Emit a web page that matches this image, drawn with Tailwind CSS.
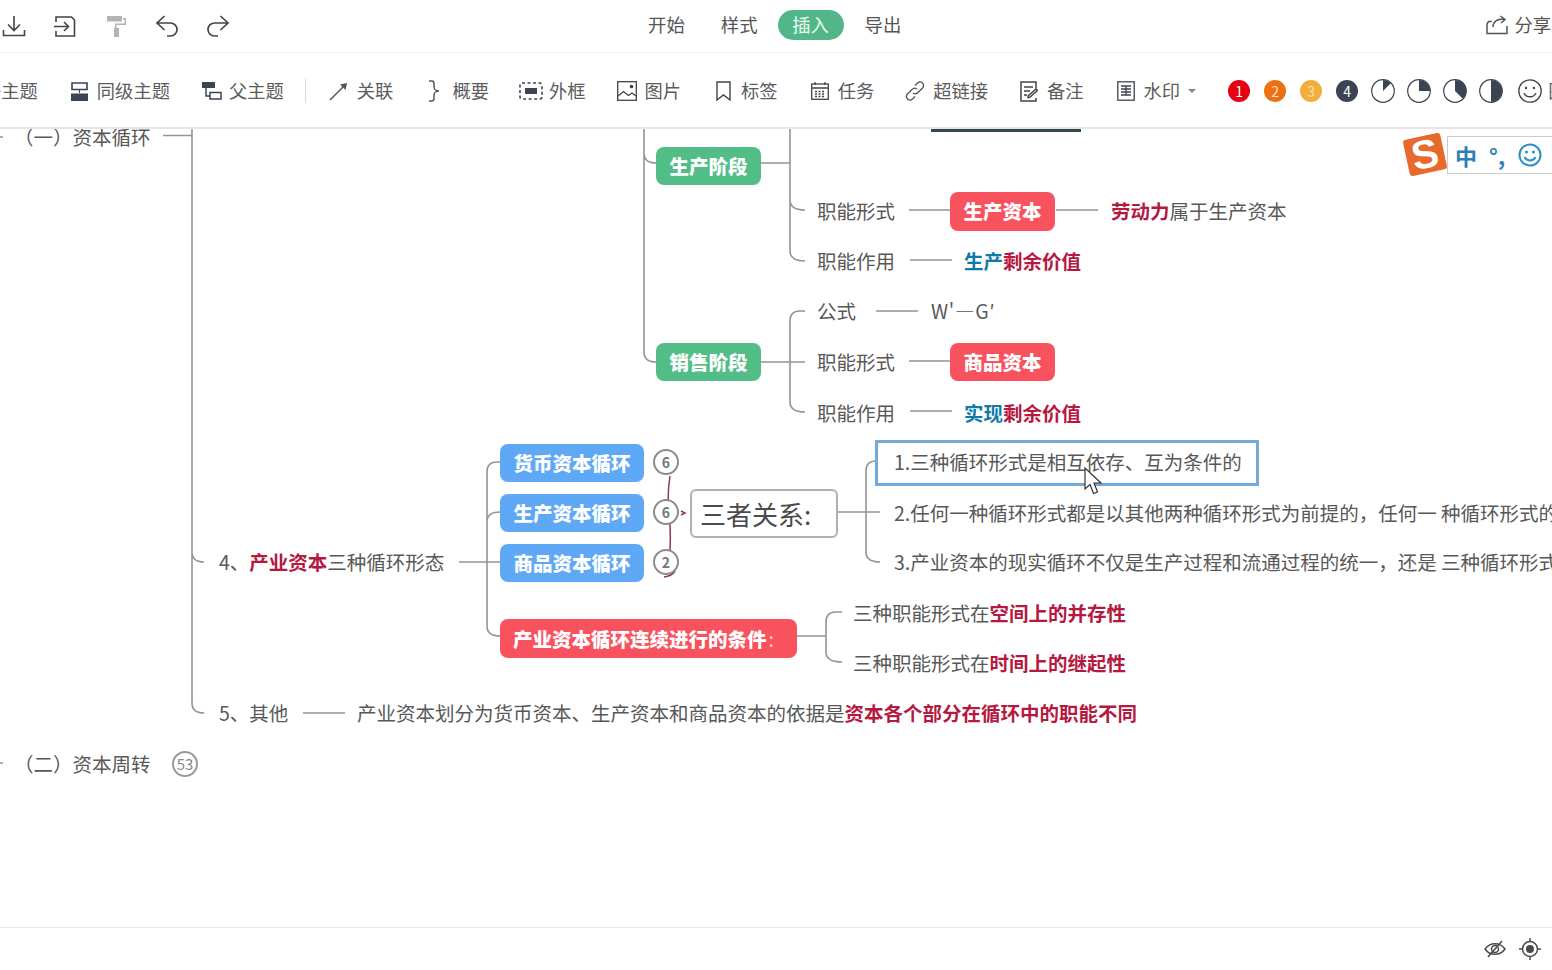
<!DOCTYPE html>
<html lang="zh-CN">
<head>
  <meta charset="UTF-8" />
  <title>思维导图</title>
  <script src="https://cdn.jsdelivr.net/npm/@tailwindcss/browser@4"></script>
</head>
<body class="bg-white overflow-hidden font-['Noto_Sans_CJK_SC','Open_Sans',sans-serif] text-[#555]">
<div class="w-[1552px] h-[970px] flex flex-col overflow-hidden">

  <!-- top bar -->
  <header class="h-[53px] shrink-0 border-b border-[#f2f2f2] flex items-center relative">
    <div class="flex items-center text-[#444] w-[240px]">
      <svg class="ml-[2px] w-[24px] h-[24px]" viewBox="0 0 24 24" fill="none" stroke="currentColor" stroke-width="1.6"><path d="M12 2v14M6 10.500l6 6 6-6M1.500 16v5.500h21V16"/></svg>
      <svg class="ml-[27px] w-[24px] h-[24px]" viewBox="0 0 24 24" fill="none" stroke="currentColor" stroke-width="1.600"><path d="M3 8V3h15.500l3 3v16H3v-5M1 12.500h14M11 8l4.500 4.500L11 17"/></svg>
      <svg class="ml-[27px] w-[24px] h-[24px]" viewBox="0 0 24 24" fill="#b4b4b4"><path d="M3 2h15v5.500H3zM19 4h3v7H12.500v3H15v9h-5V14h1v-4.500h9.500V5.500H19z"/></svg>
      <svg class="ml-[27px] w-[24px] h-[24px]" viewBox="0 0 24 24" fill="none" stroke="currentColor" stroke-width="1.700"><path d="M9.500 2L2 9l7.500 7M2 9h13.500a6 6 0 0 1 0 13H12"/></svg>
      <svg class="ml-[27px] w-[24px] h-[24px]" viewBox="0 0 24 24" fill="none" stroke="currentColor" stroke-width="1.700"><path d="M14.500 2L22 9l-7.500 7M22 9H8.500a6 6 0 0 0 0 13H12"/></svg>
    </div>
    <nav class="ml-[408px] mb-[2px] flex items-center text-[18.400px] text-[#555]">
      <span>开始</span>
      <span class="ml-[36px]">样式</span>
      <span class="ml-[20px] w-[66px] h-[30px] rounded-full bg-[#52b788] text-white/90 flex items-center justify-center">插入</span>
      <span class="ml-[21px]">导出</span>
    </nav>
    <div class="ml-[585px] mb-[2px] flex items-center text-[18.400px] whitespace-nowrap">
      <svg class="w-[22px] h-[20px]" viewBox="0 0 22 20" fill="none" stroke="#555" stroke-width="1.500"><path d="M6 6.500H2.500L1 9v9.500h20V11M7 12c0-5 4-8 11-8M14.500 1L19 4.500 15 8"/></svg>
      <span class="ml-[6px]">分享</span>
    </div>
  </header>

  <!-- insert toolbar -->
  <div class="h-[76px] pt-[2px] shrink-0 border-b-2 border-[#e6e6e6] text-[18.300px] text-[#5c5c5c] whitespace-nowrap relative z-10 bg-white flex items-center">
   <div class="flex items-center w-max shrink-0">
    <span class="ml-[-17px]">子主题</span>

    <svg class="ml-[33px] w-[17px] h-[19px]" viewBox="0 0 17 19"><path d="M1 1h15v6.500H1z" fill="none" stroke="#3b4453" stroke-width="1.600"/><path d="M8.500 8v3" stroke="#3b4453"/><path d="M0 11.500h17V19H0z" fill="#3b4453"/></svg>
    <span class="ml-[9px]">同级主题</span>

    <svg class="ml-[32px] w-[20px] h-[18px]" viewBox="0 0 20 18"><path d="M0 0h13v6H0z" fill="#3b4453"/><path d="M4 6v8h4M8 10.500h11V17H8z" fill="none" stroke="#3b4453" stroke-width="1.500"/></svg>
    <span class="ml-[7px]">父主题</span>

    <span class="ml-[21px] w-px h-[24px] bg-[#d9d9d9]"></span>

    <svg class="ml-[23px] w-[19px] h-[19px]" viewBox="0 0 19 19" fill="none" stroke="#555" stroke-width="1.500"><path d="M1 18L17 2"/><path d="M18 1l-7 1.500 5.500 5.500z" fill="#555" stroke="none"/></svg>
    <span class="ml-[9px]">关联</span>

    <svg class="ml-[34px] w-[15px] h-[22px]" viewBox="0 0 15 22" fill="none" stroke="#555" stroke-width="1.500"><path d="M2 1h3c2 0 2 1.500 2 3v3c0 2 2 4 5 4-3 0-5 2-5 4v3c0 1.500 0 3-2 3H2"/></svg>
    <span class="ml-[10px]">概要</span>

    <svg class="ml-[30px] w-[24px] h-[18px]" viewBox="0 0 24 18"><rect x="1" y="1" width="22" height="16" rx="2" fill="none" stroke="#3b4453" stroke-width="1.600" stroke-dasharray="3 2.500"/><rect x="6" y="6" width="12" height="6" fill="#3b4453"/></svg>
    <span class="ml-[6px]">外框</span>

    <svg class="ml-[31px] w-[20px] h-[20px]" viewBox="0 0 20 20" fill="none" stroke="#444" stroke-width="1.300"><rect x="0.700" y="0.700" width="18.600" height="18.600"/><path d="M1 15l5.500-4.500 5 4 3.500-2.500 4 3"/><circle cx="14.500" cy="5.500" r="1.200" fill="#444"/></svg>
    <span class="ml-[8px]">图片</span>

    <svg class="ml-[35px] w-[15px] h-[20px]" viewBox="0 0 15 20" fill="none" stroke="#444" stroke-width="1.400"><path d="M1 1h13v18l-6.500-5L1 19z"/></svg>
    <span class="ml-[10px]">标签</span>

    <svg class="ml-[33px] w-[18px] h-[18px]" viewBox="0 0 18 18" fill="none" stroke="#444" stroke-width="1.300"><rect x="0.700" y="2" width="16.600" height="15.300"/><path d="M4 0v3M14 0v3M1 6h16" /><path d="M4 9.500h10M4 12h10M4 14.500h10" stroke-dasharray="2 1.500"/></svg>
    <span class="ml-[9px]">任务</span>

    <svg class="ml-[31px] w-[20px] h-[20px]" viewBox="0 0 20 20" fill="none" stroke="#555" stroke-width="1.300"><path d="M8 12c2 1.500 3.500 1 5-.5l4.500-4.500c3-3.500-1.500-8-5-5L10 4.500M12 8c-2-1.500-3.500-1-5 .5L2.500 13c-3 3.500 1.500 8 5 5L10 15.500"/></svg>
    <span class="ml-[8px]">超链接</span>

    <svg class="ml-[32px] w-[18px] h-[21px]" viewBox="0 0 18 21" fill="none" stroke="#444" stroke-width="1.500"><path d="M16 8V1H1v19h15v-3M4 6h9M4 10h6M4 14h3M8 15l8-7 1.500 1.500-8 7H8z"/></svg>
    <span class="ml-[9px]">备注</span>

    <svg class="ml-[33px] w-[18px] h-[20px]" viewBox="0 0 18 20" fill="none" stroke="#3b4453"><rect x="0.800" y="0.800" width="16.400" height="18.400" stroke-width="1.300"/><path d="M4 5h10M4 8h10M4 11h10M4 14h10M9 5v9" stroke-width="1.300"/></svg>
    <span class="ml-[9px]">水印</span>
    <span class="ml-[8px] w-0 h-0 border-x-4 border-x-transparent border-t-4 border-t-[#888]"></span>

    <span class="ml-[32px] w-[22px] h-[22px] rounded-full bg-[#e60012] text-white text-[14px] flex items-center justify-center">1</span>
    <span class="ml-[14px] w-[22px] h-[22px] rounded-full bg-[#ef7011] text-white/80 text-[14px] flex items-center justify-center">2</span>
    <span class="ml-[14px] w-[22px] h-[22px] rounded-full bg-[#f2ae3d] text-white/60 text-[14px] flex items-center justify-center">3</span>
    <span class="ml-[14px] w-[22px] h-[22px] rounded-full bg-[#3a4452] text-white text-[14px] flex items-center justify-center">4</span>

    <svg class="ml-[13px] w-[24px] h-[24px]" viewBox="0 0 24 24"><circle cx="12" cy="12" r="11.300" fill="none" stroke="#3b4453" stroke-width="1.200"/><path d="M12 12V1a11 11 0 0 1 7.800 3.200z" fill="#3b4453"/></svg>
    <svg class="ml-[12px] w-[24px] h-[24px]" viewBox="0 0 24 24"><circle cx="12" cy="12" r="11.300" fill="none" stroke="#3b4453" stroke-width="1.200"/><path d="M12 12V1a11 11 0 0 1 11 11z" fill="#3b4453"/></svg>
    <svg class="ml-[12px] w-[24px] h-[24px]" viewBox="0 0 24 24"><circle cx="12" cy="12" r="11.300" fill="none" stroke="#3b4453" stroke-width="1.200"/><path d="M12 12V1a11 11 0 0 1 7.800 18.800z" fill="#3b4453"/></svg>
    <svg class="ml-[12px] w-[24px] h-[24px]" viewBox="0 0 24 24"><circle cx="12" cy="12" r="11.300" fill="none" stroke="#3b4453" stroke-width="1.200"/><path d="M12 1a11 11 0 0 1 0 22z" fill="#3b4453"/></svg>

    <svg class="ml-[15px] w-[24px] h-[24px]" viewBox="0 0 24 24" fill="none" stroke="#444" stroke-width="1.300"><circle cx="12" cy="12" r="11.200"/><path d="M6 14c2 5 10 5 12 0"/><circle cx="8" cy="9" r="1.200" fill="#444" stroke="none"/><circle cx="16" cy="9" r="1.200" fill="#444" stroke="none"/></svg>
    <span class="ml-[6px]">图标</span>
   </div>
  </div>

  <!-- canvas -->
  <main class="relative h-[798px] shrink-0 overflow-hidden text-[19.500px] leading-[28px] text-[#585858] whitespace-nowrap">
    <svg class="absolute left-0 top-0 w-[1552px] h-[798px]" viewBox="0 129 1552 798" fill="none" stroke="#949494" stroke-width="1.600">
      <path d="M0 137h3M0 763h3"/>
      <path d="M163 135.500h29M192 129v574q0 10 12 10M192 552q0 10 12 10"/>
      <path d="M644 129v223q0 10 12 10M644 153q0 10 12 10"/>
      <path d="M761 163h29M790 129v122q0 10 15 10M790 200q0 10 15 10"/>
      <path d="M909 210h41M1056 210h42M910 260h42"/>
      <path d="M876 311h42M761 362h44M805 311h-5q-10 0-10 10v81q0 10 15 10M909 361h41M910 411h42"/>
      <path d="M303 713h42"/>
      <path d="M459 562h41M500 462h-3q-10 0-10 10v154q0 10 13 10M487 522q0-10 13-10"/>
      <path d="M837 512h43M880 461h-4q-10 0-10 10v81q0 10 14 10"/>
      <path d="M797 636h29M842 612h-6q-10 0-10 10v30q0 10 16 10"/>
      <path d="M670 476q-3 18-1 36t1 38M664 577q8-1 11-6M681 511l4 2-4 2" stroke="#8e3a4a" stroke-width="1.500"/>
    </svg>

    <div class="absolute left-[931px] top-0 w-[150px] h-[3px] bg-[#33474f]"></div>

    <span class="absolute left-[14px] top-[-6px]">（一）资本循环</span>

    <!-- 生产阶段 -->
    <div class="absolute left-[656px] top-[18px] w-[105px] h-[38px] pb-[1px] rounded-lg bg-[#52bd87] text-white font-black flex items-center justify-center">生产阶段</div>
    <span class="absolute left-[817px] top-[68px]">职能形式</span>
    <div class="absolute left-[950px] top-[63px] w-[105px] h-[39px] pb-[1px] rounded-lg bg-[#f9525f] text-white font-black flex items-center justify-center">生产资本</div>
    <span class="absolute left-[1111px] top-[68px]"><b class="text-[#b5193f]">劳动力</b>属于生产资本</span>
    <span class="absolute left-[817px] top-[118px]">职能作用</span>
    <span class="absolute left-[964px] top-[118px] font-bold text-[#b5193f]"><span class="text-[#0e7aa8]">生产</span>剩余价值</span>

    <!-- 销售阶段 -->
    <span class="absolute left-[817px] top-[168px]">公式</span>
    <span class="absolute left-[931px] top-[168px] tracking-[0.700px]">W'—G′</span>
    <div class="absolute left-[656px] top-[214px] w-[105px] h-[38px] pb-[1px] rounded-lg bg-[#52bd87] text-white font-black flex items-center justify-center">销售阶段</div>
    <span class="absolute left-[817px] top-[219px]">职能形式</span>
    <div class="absolute left-[950px] top-[214px] w-[105px] h-[38px] pb-[1px] rounded-lg bg-[#f9525f] text-white font-black flex items-center justify-center">商品资本</div>
    <span class="absolute left-[817px] top-[270px]">职能作用</span>
    <span class="absolute left-[964px] top-[270px] font-bold text-[#b5193f]"><span class="text-[#0e7aa8]">实现</span>剩余价值</span>

    <!-- 4、产业资本 -->
    <span class="absolute left-[219px] top-[419px]">4、<b class="text-[#b5193f]">产业资本</b>三种循环形态</span>
    <div class="absolute left-[500px] top-[315px] w-[144px] h-[38px] pb-[1px] rounded-lg bg-[#5ea8f5] text-white font-black flex items-center justify-center">货币资本循环</div>
    <div class="absolute left-[500px] top-[365px] w-[144px] h-[38px] pb-[1px] rounded-lg bg-[#5ea8f5] text-white font-black flex items-center justify-center">生产资本循环</div>
    <div class="absolute left-[500px] top-[415px] w-[144px] h-[38px] pb-[1px] rounded-lg bg-[#5ea8f5] text-white font-black flex items-center justify-center">商品资本循环</div>
    <div class="absolute left-[653px] top-[320px] w-[26px] h-[26px] rounded-full border-2 border-[#8c8c8c] bg-white text-[#777] text-[14px] font-bold flex items-center justify-center">6</div>
    <div class="absolute left-[653px] top-[370px] w-[26px] h-[26px] rounded-full border-2 border-[#8c8c8c] bg-white text-[#777] text-[14px] font-bold flex items-center justify-center">6</div>
    <div class="absolute left-[653px] top-[420px] w-[26px] h-[26px] rounded-full border-2 border-[#8c8c8c] bg-white text-[#777] text-[14px] font-bold flex items-center justify-center">2</div>
    <div class="absolute left-[690px] top-[360px] w-[148px] h-[49px] rounded-md border-2 border-[#b0b0b0] bg-white text-[26px] text-[#4a4a4a] flex items-center pl-[8px]">三者关系:</div>

    <div class="absolute left-[875px] top-[311px] w-[384px] h-[46px] border-[3px] border-[#74a9d8] bg-white"></div>
    <span class="absolute left-[894px] top-[319px]">1.三种循环形式是相互依存、互为条件的</span>
    <span class="absolute left-[894px] top-[370px]">2.任何一种循环形式都是以其他两种循环形式为前提的，任何一 种循环形式的正常进行</span>
    <span class="absolute left-[894px] top-[419px]">3.产业资本的现实循环不仅是生产过程和流通过程的统一，还是 三种循环形式的统一</span>

    <div class="absolute left-[500px] top-[490px] w-[297px] h-[39px] rounded-lg bg-[#f9525f] text-white font-black flex items-center pl-[13px]">产业资本循环连续进行的条件<span class="font-normal text-white/70 ml-[2px]">:</span></div>
    <span class="absolute left-[853px] top-[470px]">三种职能形式在<b class="text-[#b5193f]">空间上的并存性</b></span>
    <span class="absolute left-[853px] top-[520px]">三种职能形式在<b class="text-[#b5193f]">时间上的继起性</b></span>

    <!-- 5、其他 -->
    <span class="absolute left-[219px] top-[570px]">5、其他</span>
    <span class="absolute left-[357px] top-[570px]">产业资本划分为货币资本、生产资本和商品资本的依据是<b class="text-[#b5193f]">资本各个部分在循环中的职能不同</b></span>

    <span class="absolute left-[14px] top-[621px]">（二）资本周转</span>
    <div class="absolute left-[172px] top-[622px] w-[26px] h-[26px] rounded-full border-2 border-[#999] text-[#888] text-[15px] flex items-center justify-center">53</div>

    <!-- sogou ime -->
    <div class="absolute left-[1447px] top-[7px] w-[120px] h-[38px] border border-[#ccc] bg-white flex items-center pl-[7px] text-[#2f7fb5] font-bold text-[22px]">
      <span>中</span>
      <span class="ml-[12px]">°,</span>
      <svg class="ml-[13px] w-[24px] h-[24px]" viewBox="0 0 24 24" fill="none" stroke="#2f8fc0" stroke-width="2"><circle cx="12" cy="12" r="10.500"/><path d="M6.500 14c2 4.500 9 4.500 11 0"/><circle cx="8.500" cy="9" r="1.500" fill="#2f8fc0" stroke="none"/><circle cx="15.500" cy="9" r="1.500" fill="#2f8fc0" stroke="none"/></svg>
    </div>
    <div class="absolute left-[1406px] top-[7px] w-[38px] h-[37px] -rotate-12 rounded-[3px] bg-[#e8692c] text-white font-['Liberation_Sans'] font-bold text-[40px] leading-[37px] flex items-center justify-center">S</div>

    <!-- cursor -->
    <svg class="absolute left-[1084px] top-[338px] w-[19px] h-[29px]" viewBox="0 0 19 29" fill="#fff" stroke="#333" stroke-width="1.200"><path d="M1 1v21l5-4.500 3.500 9 4-1.500-3.500-9h7z"/></svg>
  </main>

  <!-- footer -->
  <footer class="flex-1 border-t border-[#e8e8e8] flex items-center justify-end pr-[11px]">
    <svg class="w-[22px] h-[20px]" viewBox="0 0 22 20" fill="none" stroke="#4a4a4a" stroke-width="1.500"><path d="M1 10c5-7 15-7 20 0-5 7-15 7-20 0z"/><circle cx="11" cy="10" r="3.500"/><path d="M4 18L18 2"/></svg>
    <svg class="ml-[13px] w-[22px] h-[22px]" viewBox="0 0 22 22" fill="none" stroke="#4a4a4a" stroke-width="1.500"><circle cx="11" cy="11" r="7.500"/><circle cx="11" cy="11" r="4" fill="#4a4a4a" stroke="none"/><path d="M11 0v3.500M11 18.500V22M0 11h3.500M18.500 11H22"/></svg>
  </footer>
</div>
</body>
</html>
